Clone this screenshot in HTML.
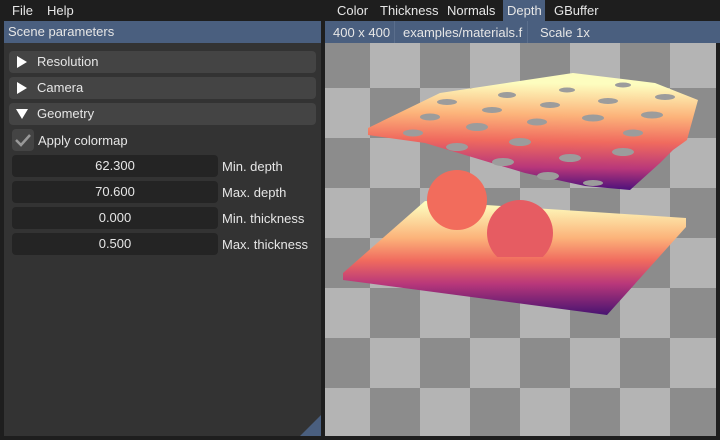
<!DOCTYPE html>
<html><head><meta charset="utf-8"><style>
*{margin:0;padding:0;box-sizing:border-box}
body{width:720px;height:440px;background:#1e1e1e;font-family:"Liberation Sans",sans-serif;font-size:13px;color:#e6e6e6;position:relative;overflow:hidden}
.abs{position:absolute}
.menu span{position:absolute;top:3px}
.tab{position:absolute;top:0;height:21px;padding-top:3px}
.hdr{background:#4a5f7f;height:22px}
.row{position:absolute;left:9px;width:307px;height:22px;background:#444;border-radius:4px}
.row .tri{position:absolute;left:7px;top:5px}
.row .t{position:absolute;left:28px;top:3px}
.inp{position:absolute;left:12px;width:206px;height:22px;background:#242424;border-radius:4px;text-align:center;padding-top:3px}
.lbl{position:absolute;left:222px}
</style></head><body>
<div class="menu"><span style="left:12px">File</span><span style="left:47px">Help</span></div>
<div class="tab" style="left:337px">Color</div>
<div class="tab" style="left:380px">Thickness</div>
<div class="tab" style="left:447px">Normals</div>
<div class="tab" style="left:503px;width:42px;background:#4a5f7f;padding-left:4px">Depth</div>
<div class="tab" style="left:554px">GBuffer</div>

<div class="abs" style="left:4px;top:21px;width:317px;height:415px;background:#333"></div>
<div class="abs hdr" style="left:4px;top:21px;width:317px;padding:3px 4px">Scene parameters</div>
<div class="row" style="top:51px"><svg class="tri" width="12" height="12"><path d="M1 0L11 6L1 12Z" fill="#fff"/></svg><span class="t">Resolution</span></div>
<div class="row" style="top:77px"><svg class="tri" width="12" height="12"><path d="M1 0L11 6L1 12Z" fill="#fff"/></svg><span class="t">Camera</span></div>
<div class="row" style="top:103px"><svg class="tri" width="12" height="12"><path d="M0 1L12 1L6 11Z" fill="#fff"/></svg><span class="t">Geometry</span></div>
<div class="abs" style="left:12px;top:129px;width:22px;height:22px;background:#444;border-radius:4px"><svg width="22" height="22"><path d="M4 11L9 16L18 6" stroke="#999" stroke-width="2.5" fill="none"/></svg></div>
<div class="abs" style="left:38px;top:133px">Apply colormap</div>
<div class="inp" style="top:155px">62.300</div><div class="lbl" style="top:159px">Min. depth</div>
<div class="inp" style="top:181px">70.600</div><div class="lbl" style="top:185px">Max. depth</div>
<div class="inp" style="top:207px">0.000</div><div class="lbl" style="top:211px">Min. thickness</div>
<div class="inp" style="top:233px">0.500</div><div class="lbl" style="top:237px">Max. thickness</div>
<svg class="abs" style="left:300px;top:415px" width="21" height="21"><path d="M21 0L21 21L0 21Z" fill="#4a5f7f"/></svg>

<div class="abs hdr" style="left:325px;top:21px;width:395px"></div>
<div class="abs" style="left:333px;top:25px">400 x 400</div>
<div class="abs" style="left:394px;top:21px;width:1px;height:22px;background:#5a6e8c"></div>
<div class="abs" style="left:403px;top:25px">examples/materials.f</div>
<div class="abs" style="left:527px;top:21px;width:1px;height:22px;background:#5a6e8c"></div>
<div class="abs" style="left:540px;top:25px">Scale 1x</div>

<svg class="abs" style="left:325px;top:43px" width="391" height="393">
<defs>
<pattern id="ck" x="-5" y="-5" width="100" height="100" patternUnits="userSpaceOnUse">
<rect width="100" height="100" fill="#b4b4b4"/><rect width="50" height="50" fill="#8c8c8c"/><rect x="50" y="50" width="50" height="50" fill="#8c8c8c"/></pattern>
<linearGradient id="g1" x1="0.476" y1="0.085" x2="0.436" y2="0.983">
<stop offset="0" stop-color="#fdfdbf"/><stop offset=".3" stop-color="#fcb37a"/><stop offset=".55" stop-color="#f06a5e"/><stop offset=".8" stop-color="#b8377a"/><stop offset="1" stop-color="#4e117b"/></linearGradient>
<linearGradient id="g2" x1="0" y1="0.02" x2="0" y2="1.03">
<stop offset="0" stop-color="#fdfdbf"/><stop offset=".3" stop-color="#fcb37a"/><stop offset=".5" stop-color="#f06a5e"/><stop offset=".7" stop-color="#b8377a"/><stop offset="1" stop-color="#3b0f70"/></linearGradient>
<clipPath id="cp"><rect x="0" y="0" width="391" height="214"/></clipPath>
</defs>
<rect width="391" height="393" fill="url(#ck)"/>
<path d="M43 85L115 50L248 30L330 40L373 57L362 97L348 107L335 120L305 147L260 143L200 130L150 115L100 100L43 92Z" fill="url(#g1)"/>
<g fill="#9c9c9c">
<ellipse cx="88" cy="90" rx="10" ry="3.5"/><ellipse cx="132" cy="104" rx="11" ry="4"/><ellipse cx="178" cy="119" rx="11" ry="4"/><ellipse cx="223" cy="133" rx="11" ry="4"/><ellipse cx="268" cy="140" rx="10" ry="3"/>
<ellipse cx="105" cy="74" rx="10" ry="3.5"/><ellipse cx="152" cy="84" rx="11" ry="4"/><ellipse cx="195" cy="99" rx="11" ry="4"/><ellipse cx="245" cy="115" rx="11" ry="4"/><ellipse cx="298" cy="109" rx="11" ry="4"/>
<ellipse cx="122" cy="59" rx="10" ry="3"/><ellipse cx="167" cy="67" rx="10" ry="3"/><ellipse cx="212" cy="79" rx="10" ry="3.5"/><ellipse cx="268" cy="75" rx="11" ry="3.5"/><ellipse cx="327" cy="72" rx="11" ry="3.5"/>
<ellipse cx="182" cy="52" rx="9" ry="3"/><ellipse cx="225" cy="62" rx="10" ry="3"/><ellipse cx="283" cy="58" rx="10" ry="3"/><ellipse cx="340" cy="54" rx="10" ry="3"/>
<ellipse cx="242" cy="47" rx="8" ry="2.5"/><ellipse cx="298" cy="42" rx="8" ry="2.5"/><ellipse cx="308" cy="90" rx="10" ry="3.5"/></g>
<path d="M18 230L100 158L361 175L361 184L282 272L18 237Z" fill="url(#g2)"/>
<circle cx="132" cy="157" r="30" fill="#f26c5c"/>
<circle cx="195" cy="190" r="33" fill="#e65c62" clip-path="url(#cp)"/>
</svg>
</body></html>
